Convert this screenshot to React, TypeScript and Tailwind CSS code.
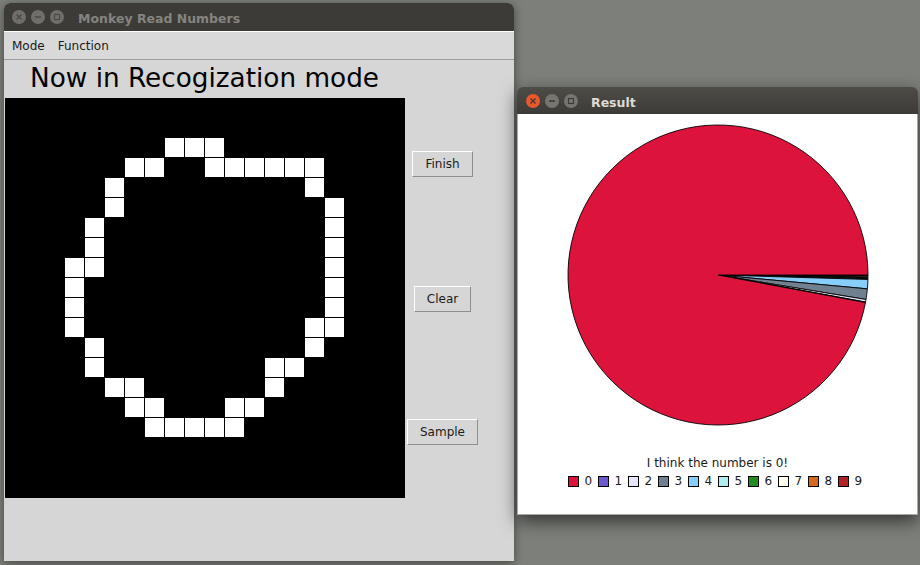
import React from 'react';

const FONT = { fontFamily: '"DejaVu Sans", "Liberation Sans", sans-serif' };

// cells lit on the 20x20 drawing board: [row, cols]
const STROKE: [number, number[]][] = [
  [2, [8, 9, 10]],
  [3, [6, 7, 10, 11, 12, 13, 14, 15]],
  [4, [5, 15]],
  [5, [5, 16]],
  [6, [4, 16]],
  [7, [4, 16]],
  [8, [3, 4, 16]],
  [9, [3, 16]],
  [10, [3, 16]],
  [11, [3, 15, 16]],
  [12, [4, 15]],
  [13, [4, 13, 14]],
  [14, [5, 6, 13]],
  [15, [6, 7, 11, 12]],
  [16, [7, 8, 9, 10, 11]],
];

const LEGEND = [
  { label: '0', color: '#dc143c' },
  { label: '1', color: '#6a5acd' },
  { label: '2', color: '#e6e6fa' },
  { label: '3', color: '#708090' },
  { label: '4', color: '#87cefa' },
  { label: '5', color: '#afeeee' },
  { label: '6', color: '#228b22' },
  { label: '7', color: '#fffff0' },
  { label: '8', color: '#d2691e' },
  { label: '9', color: '#b22222' },
];

// slice angles in degrees, clockwise from east (screen space)
const SLICES = [
  { from: 0, to: 0.35, color: '#b22222' },
  { from: 0.35, to: 0.7, color: '#d2691e' },
  { from: 0.7, to: 1.0, color: '#fffff0' },
  { from: 1.0, to: 1.4, color: '#228b22' },
  { from: 1.4, to: 1.7, color: '#afeeee' },
  { from: 1.7, to: 5.3, color: '#87cefa' },
  { from: 5.3, to: 9.4, color: '#708090' },
  { from: 9.4, to: 10.4, color: '#e6e6fa' },
  { from: 10.4, to: 10.6, color: '#6a5acd' },
  { from: 10.6, to: 360, color: '#dc143c' },
];

function slicePath(from: number, to: number, r: number) {
  const a = (from * Math.PI) / 180;
  const b = (to * Math.PI) / 180;
  const x1 = r * Math.cos(a);
  const y1 = r * Math.sin(a);
  const x2 = r * Math.cos(b);
  const y2 = r * Math.sin(b);
  const large = to - from > 180 ? 1 : 0;
  return `M0 0 L${x1} ${y1} A${r} ${r} 0 ${large} 1 ${x2} ${y2} Z`;
}

function WinButtons({ active }: { active: boolean }) {
  const gray = active ? 'bg-[#76756f]' : 'bg-[#6f6e69]';
  const glyph = active ? '#3a3935' : '#4a4944';
  return (
    <div className="flex items-center gap-[5px]">
      <div
        className={`w-[14px] h-[14px] rounded-full flex items-center justify-center ${
          active ? 'bg-[#e9582a]' : gray
        }`}
      >
        <svg width="8" height="8" viewBox="0 0 8 8">
          <path d="M1.5 1.5 L6.5 6.5 M6.5 1.5 L1.5 6.5" stroke={glyph} strokeWidth="1.2" />
        </svg>
      </div>
      <div className={`w-[14px] h-[14px] rounded-full flex items-center justify-center ${gray}`}>
        <svg width="8" height="8" viewBox="0 0 8 8">
          <path d="M1 4 H7" stroke={glyph} strokeWidth="1.3" />
        </svg>
      </div>
      <div className={`w-[14px] h-[14px] rounded-full flex items-center justify-center ${gray}`}>
        <svg width="8" height="8" viewBox="0 0 8 8">
          <rect x="1.5" y="1.5" width="5" height="5" fill="none" stroke={glyph} strokeWidth="1.1" />
        </svg>
      </div>
    </div>
  );
}

function AwtButton({ label }: { label: string }) {
  return (
    <button className="h-[26px] px-3 bg-[#d6d6d6] border border-t-white border-l-white border-r-[#8e8e8e] border-b-[#8e8e8e] text-[12px] leading-[14px] text-[#1b1b1b]">
      {label}
    </button>
  );
}

export default function App() {
  const lit = new Set<string>();
  STROKE.forEach(([r, cols]) => cols.forEach((c) => lit.add(`${r}-${c}`)));

  return (
    <div className="relative w-[920px] h-[565px] overflow-hidden bg-[#7d7f7a]" style={FONT}>
      {/* Main window */}
      <div className="absolute left-[4px] top-[3px] w-[510px] h-[558px] flex flex-col rounded-t-[6px] overflow-hidden bg-[#d6d6d6] shadow-[0_2px_10px_rgba(0,0,0,0.45)]">
        <div className="h-[28px] shrink-0 flex items-center pl-[8px] bg-[#3c3b37]">
          <WinButtons active={false} />
          <span className="ml-[14px] mt-[3px] text-[12.5px] leading-[15px] font-bold text-[#85847f]">Monkey Read Numbers</span>
        </div>
        <div className="h-[29px] shrink-0 flex items-center gap-[13px] pl-[8px] bg-[#d9d9d9] border-t border-t-white border-b border-b-[#9c9c9c] text-[12px] leading-[14px] text-[#1a1a1a]">
          <span>Mode</span>
          <span>Function</span>
        </div>
        <div className="h-[38px] shrink-0 pl-[26px] pt-[3px] text-[26.3px] leading-[30px] text-black">
          Now in Recogization mode
        </div>
        <div className="flex">
          <div className="ml-[1px] w-[400px] h-[400px] bg-black grid grid-cols-[repeat(20,20px)] grid-rows-[repeat(20,20px)]">
            {Array.from({ length: 400 }, (_, i) => {
              const r = Math.floor(i / 20);
              const c = i % 20;
              return (
                <div key={i}>
                  {lit.has(`${r}-${c}`) && <div className="w-[19px] h-[19px] bg-white" />}
                </div>
              );
            })}
          </div>
          <div className="w-[75px] h-[400px] flex flex-col">
            <div className="flex-1 flex items-center justify-center pb-[3px]">
              <AwtButton label="Finish" />
            </div>
            <div className="flex-1 flex items-center justify-center">
              <AwtButton label="Clear" />
            </div>
            <div className="flex-1 flex items-center justify-center">
              <AwtButton label="Sample" />
            </div>
          </div>
        </div>
      </div>

      {/* Result window */}
      <div className="absolute left-[517px] top-[87px] w-[401px] h-[428px] flex flex-col rounded-t-[6px] overflow-hidden shadow-[0_6px_18px_rgba(0,0,0,0.6)]">
        <div className="h-[27px] shrink-0 flex items-center pl-[9px] bg-gradient-to-b from-[#4d4c47] to-[#3c3b37]">
          <WinButtons active />
          <span className="ml-[13px] mt-[4px] text-[12.5px] leading-[15px] font-bold text-[#dfdbd2]">Result</span>
        </div>
        <div className="flex-1 flex flex-col items-center bg-white border border-t-0 border-[#a9a9a9]">
          <svg width="302" height="302" viewBox="-151 -151 302 302" className="mt-[10px]">
            {SLICES.map((s) => (
              <path
                key={s.color}
                d={slicePath(s.from, s.to, 150)}
                fill={s.color}
                stroke="#000"
                strokeWidth="0.9"
                strokeLinejoin="round"
              />
            ))}
          </svg>
          <div className="mt-[30px] text-[12px] leading-[14px] text-[#1a1a1a]">I think the number is 0!</div>
          <div className="mt-[4px] flex">
            {LEGEND.map((item) => (
              <div key={item.label} className="w-[30px] flex items-center gap-[6px] text-[12px] leading-[14px] text-[#1a1a1a]">
                <span className="block shrink-0 w-[11px] h-[11px] border border-black" style={{ backgroundColor: item.color }} />
                <span>{item.label}</span>
              </div>
            ))}
          </div>
        </div>
      </div>
    </div>
  );
}
